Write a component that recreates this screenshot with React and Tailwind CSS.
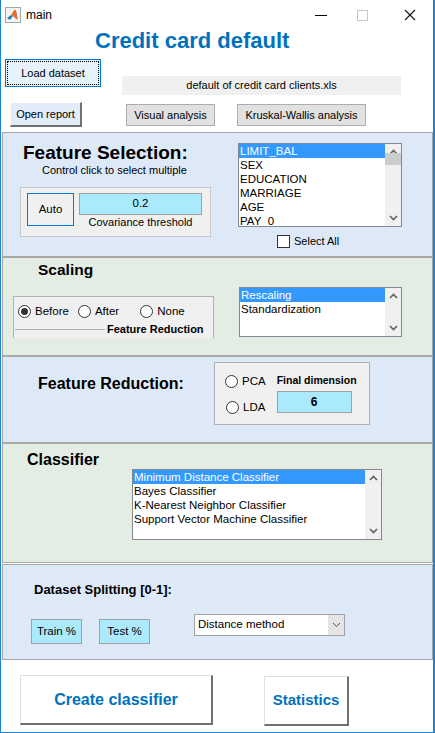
import React from 'react';

const font = { fontFamily: '"Liberation Sans", Arial, sans-serif' };

const Chevron = ({ up }) => (
  <svg width="9" height="6" viewBox="0 0 9 6" className="block">
    <path
      d={up ? "M1 5 L4.5 1.5 L8 5" : "M1 1 L4.5 4.5 L8 1"}
      fill="none"
      stroke="#606060"
      strokeWidth="1.6"
    />
  </svg>
);

const ListBox = ({ items, selected = 0, className, thumb }) => (
  <div className={`flex border border-[#828790] bg-white ${className}`}>
    <div className="flex-1 overflow-hidden">
      {items.map((item, i) => (
        <div
          key={i}
          className={`h-[14px] pl-[1px] text-[11.5px] leading-[14px] whitespace-nowrap ${
            i === selected ? 'bg-[#3399ff] text-white' : 'text-black'
          }`}
        >
          {item}
        </div>
      ))}
    </div>
    <div className="w-[16px] bg-[#f0f0f0] flex flex-col items-center justify-between py-[5px]">
      <Chevron up />
      {thumb && <div className="w-[16px] h-[12px] bg-[#cdcdcd] -mt-[2px]" />}
      <div className="flex-1" />
      <Chevron />
    </div>
  </div>
);

const Radio = ({ checked, label }) => (
  <div className="flex items-center gap-[4px]">
    <div className="w-[13px] h-[13px] rounded-full border border-[#333] bg-white flex items-center justify-center">
      {checked && <div className="w-[7px] h-[7px] rounded-full bg-[#333]" />}
    </div>
    <span className="text-[11.5px] text-black">{label}</span>
  </div>
);

const MatlabIcon = () => (
  <svg width="16" height="16" viewBox="0 0 16 16">
    <rect x="0.5" y="0.5" width="15" height="15" fill="#f4f4f4" stroke="#9aa" />
    <path d="M2 11 L6 8 L8 9 L5 13 Z" fill="#2a7fb8" />
    <path d="M6 8 L9.5 2.5 L13 13 L10 11 L8 9 Z" fill="#e8702a" />
    <path d="M9.5 2.5 L11 4 L13 13 Z" fill="#b8321a" />
  </svg>
);

export default function App() {
  return (
    <div
      style={font}
      className="w-[435px] h-[733px] bg-white border-l border-r-2 border-b border-[#1883d7] flex flex-col overflow-hidden"
    >
      {/* title bar */}
      <div className="h-[30px] flex items-center shrink-0">
        <div className="ml-[4px]">
          <MatlabIcon />
        </div>
        <span className="ml-[5px] text-[12px] text-black">main</span>
        <div className="flex-1" />
        <div className="w-[12px] h-[1px] bg-black mr-[30px]" />
        <div className="w-[11px] h-[11px] border border-[#c8c8c8] mr-[36px]" />
        <svg width="12" height="12" viewBox="0 0 12 12" className="mr-[17px]">
          <path d="M1 1 L11 11 M11 1 L1 11" stroke="#111" strokeWidth="1.1" />
        </svg>
      </div>

      {/* header */}
      <div className="h-[102px] shrink-0 relative">
        <div className="pl-[94px] -mt-[1px] text-[22px] leading-[24px] font-bold text-[#0072bd]">
          Credit card default
        </div>
        <div className="flex items-start mt-[6px]">
          <div className="ml-[4px] w-[96px] h-[28px] border border-[#0078d7] bg-[#e5f1fb] p-[1px]">
            <div className="w-full h-full border border-dotted border-black flex items-center justify-center text-[11px] text-black">
              Load dataset
            </div>
          </div>
          <div className="ml-[21px] mt-[17px] w-[279px] h-[19px] bg-[#f0f0f0] flex items-center justify-center text-[11px] text-black">
            default of credit card clients.xls
          </div>
        </div>
        <div className="flex items-start mt-[7px]">
          <div className="ml-[9px] w-[72px] h-[25px] bg-[#e1ecf8] border-t border-l border-white border-r-2 border-b-2 border-r-[#707070] border-b-[#707070] flex items-center justify-center text-[11px] text-black">
            Open report
          </div>
          <div className="ml-[44px] mt-[2px] w-[89px] h-[22px] bg-[#e1e1e1] border border-[#adadad] flex items-center justify-center text-[11px] text-black">
            Visual analysis
          </div>
          <div className="ml-[22px] mt-[2px] w-[129px] h-[22px] bg-[#e1e1e1] border border-[#adadad] flex items-center justify-center text-[11px] text-black">
            Kruskal-Wallis analysis
          </div>
        </div>
      </div>

      {/* Feature Selection */}
      <div className="mx-[1px] w-[431px] h-[125px] shrink-0 bg-[#dee9f8] border border-[#a8a8a8] flex">
        <div className="w-[235px] pl-[17px]">
          <div className="mt-[9px] pl-[3px] text-[19px] leading-[22px] font-bold text-black">
            Feature Selection:
          </div>
          <div className="pl-[22px] text-[11px] leading-[13px] text-black">
            Control click to select multiple
          </div>
          <div className="mt-[10px] w-[191px] h-[50px] bg-[#f0f0f0] border border-[#c8c8c8] flex items-start pt-[5px] pl-[6px]">
            <div className="w-[47px] h-[33px] border border-[#0078d7] bg-[#f0f0f0] flex items-center justify-center text-[11.5px] text-black">
              Auto
            </div>
            <div className="ml-[5px] flex flex-col items-center">
              <div className="w-[123px] h-[22px] bg-[#abe9fd] border border-[#a0a0a0] flex items-center justify-center text-[11.5px] text-black">
                0.2
              </div>
              <div className="mt-[1px] text-[11px] leading-[13px] text-black">
                Covariance threshold
              </div>
            </div>
          </div>
        </div>
        <div className="flex flex-col">
          <ListBox
            className="mt-[10px] w-[164px] h-[84px]"
            items={['LIMIT_BAL', 'SEX', 'EDUCATION', 'MARRIAGE', 'AGE', 'PAY_0']}
            thumb
          />
          <div className="mt-[6px] ml-[39px] flex items-center gap-[4px]">
            <div className="w-[13px] h-[13px] border border-[#333] bg-white" />
            <span className="text-[11px] text-black">Select All</span>
          </div>
        </div>
      </div>

      {/* Scaling */}
      <div className="mx-[1px] w-[431px] h-[99px] shrink-0 bg-[#e3ede3] border border-[#a8a8a8] flex">
        <div className="w-[236px] pl-[10px]">
          <div className="mt-[2px] pl-[25px] text-[15.5px] leading-[20px] font-bold text-black">
            Scaling
          </div>
          <div className="mt-[16px] w-[201px] h-[42px] bg-[#f0f0f0] border-t border-l border-r border-[#b0b0b0] flex flex-col">
            <div className="flex items-center pl-[4px] pt-[6px] gap-[9px]">
              <Radio checked label="Before" />
              <Radio label="After" />
              <div className="ml-[12px]">
                <Radio label="None" />
              </div>
            </div>
            <div className="flex items-center mt-[3px]">
              <div className="w-[90px] h-[1px] bg-[#b0b0b0] ml-[1px]" />
              <span className="ml-[2px] text-[11px] leading-[13px] font-bold text-black">
                Feature Reduction
              </span>
            </div>
          </div>
        </div>
        <ListBox
          className="mt-[29px] w-[163px] h-[50px]"
          items={['Rescaling', 'Standardization']}
        />
      </div>

      {/* Feature Reduction */}
      <div className="mx-[1px] w-[431px] h-[87px] shrink-0 bg-[#dee9f8] border border-[#a8a8a8] flex">
        <div className="w-[211px] pl-[35px] pt-[17px] text-[16px] leading-[20px] font-bold text-black">
          Feature Reduction:
        </div>
        <div className="mt-[5px] w-[156px] h-[63px] bg-[#f0f0f0] border border-[#b0b0b0] flex">
          <div className="flex flex-col pl-[10px] pt-[10px] gap-[9px]">
            <Radio label="PCA" />
            <div className="ml-[1px]">
              <Radio label="LDA" />
            </div>
          </div>
          <div className="ml-[11px] flex flex-col pt-[11px]">
            <div className="text-[10.5px] leading-[13px] font-bold text-black">
              Final dimension
            </div>
            <div className="mt-[4px] w-[75px] h-[22px] bg-[#abe9fd] border border-[#a0a0a0] flex items-center justify-center text-[12px] font-bold text-black">
              6
            </div>
          </div>
        </div>
      </div>

      {/* Classifier */}
      <div className="mx-[1px] w-[431px] h-[120px] shrink-0 bg-[#e3ede3] border border-[#a8a8a8] flex">
        <div className="w-[129px] pl-[24px] pt-[6px] text-[16px] leading-[20px] font-bold text-black">
          Classifier
        </div>
        <ListBox
          className="mt-[25px] w-[250px] h-[71px]"
          items={[
            'Minimum Distance Classifier',
            'Bayes Classifier',
            'K-Nearest Neighbor Classifier',
            'Support Vector Machine Classifier',
          ]}
        />
      </div>

      {/* Dataset Splitting */}
      <div className="mx-[1px] mt-[1px] w-[431px] h-[96px] shrink-0 bg-[#dee9f8] border border-[#a8a8a8] flex flex-col">
        <div className="pl-[31px] pt-[17px] text-[13px] leading-[16px] font-bold text-black">
          Dataset Splitting [0-1]:
        </div>
        <div className="flex items-start mt-[16px]">
          <div className="ml-[28px] mt-[5px] w-[51px] h-[25px] bg-[#abe9fd] border border-[#a0a0a0] flex items-center justify-center text-[11.5px] text-black">
            Train %
          </div>
          <div className="ml-[17px] mt-[5px] w-[51px] h-[25px] bg-[#abe9fd] border border-[#a0a0a0] flex items-center justify-center text-[11.5px] text-black">
            Test %
          </div>
          <div className="ml-[44px] w-[151px] h-[22px] bg-white border border-[#a0a0a0] flex items-center">
            <span className="flex-1 pl-[3px] text-[11.5px] text-black">Distance method</span>
            <div className="w-[16px] h-full bg-[#e5e5e5] flex items-center justify-center">
              <svg width="9" height="6" viewBox="0 0 9 6">
                <path d="M1 1 L4.5 4.5 L8 1" fill="none" stroke="#555" strokeWidth="1" />
              </svg>
            </div>
          </div>
        </div>
      </div>

      {/* bottom buttons */}
      <div className="flex items-start mt-[15px]">
        <div className="ml-[19px] w-[193px] h-[50px] bg-white border-t border-l border-[#e0e0e0] border-r-2 border-b-2 border-r-[#707070] border-b-[#707070] flex items-center justify-center text-[16px] font-bold text-[#0072bd]">
          Create classifier
        </div>
        <div className="ml-[51px] mt-[1px] w-[85px] h-[50px] bg-white border-t border-l border-[#e0e0e0] border-r-2 border-b-2 border-r-[#707070] border-b-[#707070] flex items-center justify-center text-[15px] font-bold text-[#0072bd]">
          Statistics
        </div>
      </div>
    </div>
  );
}
